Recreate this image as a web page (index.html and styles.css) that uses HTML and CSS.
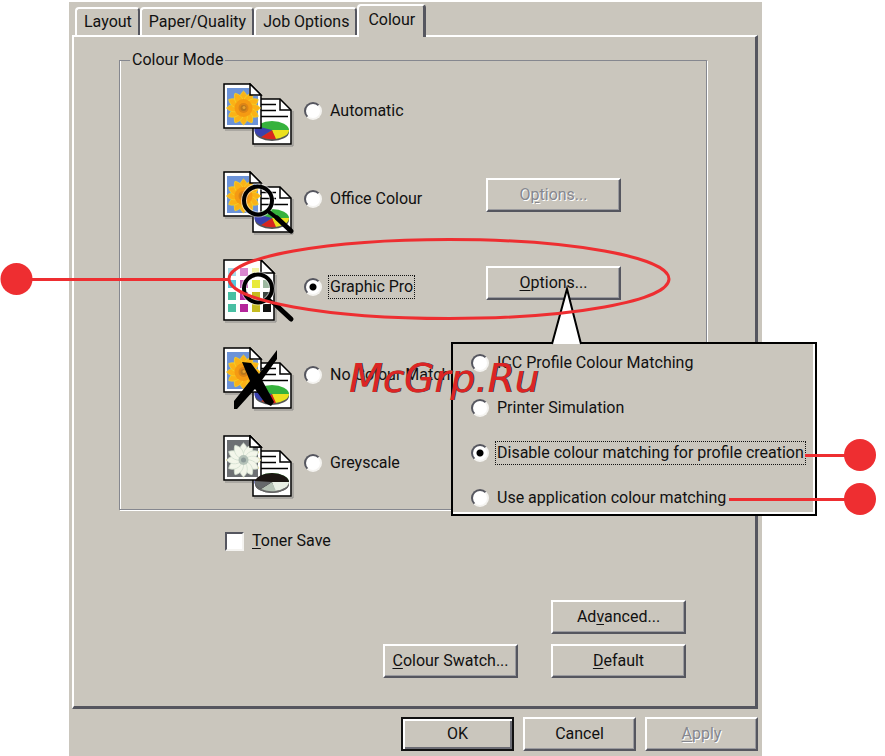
FILE: index.html
```html
<!DOCTYPE html>
<html lang="en">
<head>
<meta charset="UTF-8">
<meta name="viewport" content="width=device-width, initial-scale=1.0">
<title>Printer Properties - Colour</title>
<link rel="stylesheet" href="styles.css">
</head>
<body>

<!-- shared icon parts -->
<svg class="defs" width="0" height="0" aria-hidden="true">
    <defs>
        <path id="petal" d="M20.500 25 C14 17 17 11 20.500 8 C24 11 27 17 20.500 25 Z"/>
        <g id="petals">
            <use href="#petal"/>
            <use href="#petal" transform="rotate(30 20.500 25)"/>
            <use href="#petal" transform="rotate(60 20.500 25)"/>
            <use href="#petal" transform="rotate(90 20.500 25)"/>
            <use href="#petal" transform="rotate(120 20.500 25)"/>
            <use href="#petal" transform="rotate(150 20.500 25)"/>
            <use href="#petal" transform="rotate(180 20.500 25)"/>
            <use href="#petal" transform="rotate(210 20.500 25)"/>
            <use href="#petal" transform="rotate(240 20.500 25)"/>
            <use href="#petal" transform="rotate(270 20.500 25)"/>
            <use href="#petal" transform="rotate(300 20.500 25)"/>
            <use href="#petal" transform="rotate(330 20.500 25)"/>
        </g>
        <g id="flower">
            <use href="#petals" fill="#fbb216" stroke="#f3d02a" stroke-width=".8"/>
            <circle cx="20.500" cy="25" r="9" fill="#f59a12"/>
            <circle cx="20.500" cy="25" r="5" fill="#dd8416"/>
            <circle cx="20.500" cy="25" r="3" fill="#b9781c"/>
            <circle cx="21" cy="24.500" r="1.500" fill="#e9a22c"/>
        </g>
        <g id="pages">
            <path d="M31 63 H70 V28" fill="none" stroke="#8b8a88"/>
            <path d="M30 16 H57 L68 27 V61 H30 Z" fill="#fff" stroke="#000" stroke-width="1.500"/>
            <path d="M57 16 V27 H68" fill="none" stroke="#000" stroke-width="1.500"/>
            <path d="M38 21.500 H53 M38 27.500 H53 M38 33.500 H65" stroke="#000" stroke-width="1.500"/>
            <ellipse cx="49" cy="49" rx="17" ry="9" fill="#555"/>
            <ellipse cx="49" cy="47" rx="17" ry="9" fill="#36b23c"/>
            <path d="M49 47 L66 47 A17 9 0 0 1 52 56 Z" fill="#ece01e"/>
            <path d="M49 47 L53 56 A17 9 0 0 1 38 54 Z" fill="#d8251f"/>
            <path d="M49 47 L38 54 A17 9 0 0 1 33 43 Z" fill="#3a41ad"/>
            <path d="M2 47 H29" stroke="#8b8a88"/>
            <path d="M1 1 H27 L38 12 V45 H1 Z" fill="#fff" stroke="#000" stroke-width="1.500"/>
            <path d="M4 5 H26 V13 H35 V42 H4 Z" fill="#6c93d8"/>
            <use href="#flower"/>
            <path d="M27 1 V12 H38 Z" fill="#fff" stroke="#000" stroke-width="1.500"/>
        </g>
        <g id="lens" fill="none" stroke="#000" stroke-linecap="round">
            <circle cx="35" cy="29.500" r="14" stroke="#fff" stroke-opacity=".5" stroke-width="6"/>
            <circle cx="35" cy="29.500" r="14" stroke-width="4"/>
            <path d="M46 41 L54 47" stroke-width="4"/>
            <path d="M54 47 L68 60" stroke-width="5"/>
        </g>
    </defs>
</svg>

<main class="page">
    <div class="dialog">
        <div class="tabs" role="tablist">
            <button type="button" class="tab" role="tab">Layout</button>
            <button type="button" class="tab" role="tab">Paper/Quality</button>
            <button type="button" class="tab" role="tab">Job Options</button>
            <button type="button" class="tab active" role="tab" aria-selected="true">Colour</button>
        </div>

        <div class="panel" role="tabpanel">
            <fieldset class="modes">
                <legend>Colour Mode</legend>

                <div class="mode">
                    <svg class="icon" viewBox="0 0 72 64" aria-hidden="true"><use href="#pages"/></svg>
                    <label class="choice" for="automatic">
                        <input type="radio" id="automatic" name="mode">
                        <span>Automatic</span>
                    </label>
                </div>

                <div class="mode">
                    <svg class="icon" viewBox="0 0 72 64" aria-hidden="true"><use href="#pages"/><use href="#lens"/></svg>
                    <label class="choice" for="office">
                        <input type="radio" id="office" name="mode">
                        <span>Office Colour</span>
                    </label>
                    <button type="button" class="btn" disabled>O<u>p</u>tions...</button>
                </div>

                <div class="mode">
                    <svg class="icon" viewBox="0 0 72 64" aria-hidden="true">
                        <path d="M2 63 H53 V16" fill="none" stroke="#8b8a88"/>
                        <path d="M1 1 H38 L51 14 V61 H1 Z" fill="#fff" stroke="#000" stroke-width="1.500"/>
                        <path d="M5 9 h8 v8 h-8 Z" fill="#a5dce8"/>
                        <path d="M17 9 h8 v8 h-8 Z" fill="#d987cf"/>
                        <path d="M29 9 h7 v8 h-7 Z" fill="#f3f3a4"/>
                        <path d="M5 21 h8 v8 h-8 Z" fill="#59c6dc"/>
                        <path d="M17 21 h8 v8 h-8 Z" fill="#c65bb8"/>
                        <path d="M29 21 h8 v8 h-8 Z" fill="#e8ea3c"/>
                        <path d="M40 21 h8 v8 h-8 Z" fill="#9cb8a0"/>
                        <path d="M5 33 h8 v8 h-8 Z" fill="#48bfa3"/>
                        <path d="M17 33 h8 v8 h-8 Z" fill="#b5269b"/>
                        <path d="M29 33 h8 v8 h-8 Z" fill="#c5bb20"/>
                        <path d="M40 33 h8 v8 h-8 Z" fill="#3c4540"/>
                        <path d="M5 45 h8 v8 h-8 Z" fill="#48bfa3"/>
                        <path d="M17 45 h8 v8 h-8 Z" fill="#b5269b"/>
                        <path d="M29 45 h8 v8 h-8 Z" fill="#c5bb20"/>
                        <path d="M40 45 h8 v8 h-8 Z" fill="#111"/>
                        <path d="M38 1 V14 H51 Z" fill="#fff" stroke="#000" stroke-width="1.500"/>
                        <use href="#lens"/>
                    </svg>
                    <label class="choice focused" for="graphic">
                        <input type="radio" id="graphic" name="mode" checked>
                        <span>Graphic Pro</span>
                    </label>
                    <button type="button" class="btn"><u>O</u>ptions...</button>
                </div>

                <div class="mode">
                    <svg class="icon" viewBox="0 0 72 64" aria-hidden="true">
                        <use href="#pages"/>
                        <path d="M54 3 V12 L39 33 L51 55 L48 59 L42 56 L32 42 L14 62 L11 62 V54 L27 34 L19 15 L28 16 L36 27 Z" fill="#000"/>
                    </svg>
                    <label class="choice" for="nomatch">
                        <input type="radio" id="nomatch" name="mode">
                        <span>No Colour Matching</span>
                    </label>
                </div>

                <div class="mode">
                    <svg class="icon" viewBox="0 0 72 64" aria-hidden="true">
                        <use href="#pages"/>
                        <path d="M4 5 H26 V13 H35 V42 H4 Z" fill="#6d7073"/>
                        <use href="#petals" fill="#f3f6ea" stroke="#d3dfd0" stroke-width=".8"/>
                        <path d="M27 1 V12 H38 Z" fill="#fff" stroke="#000" stroke-width="1.500"/>
                        <circle cx="20.500" cy="25" r="5" fill="#b4c2b8"/>
                        <circle cx="20.500" cy="25" r="2.500" fill="#8d9b99"/>
                        <ellipse cx="49" cy="49" rx="17" ry="9" fill="#666"/>
                        <ellipse cx="49" cy="47" rx="17" ry="9" fill="#1c1613"/>
                        <path d="M49 47 L66 47 A17 9 0 0 1 52 56 Z" fill="#e9efe4"/>
                        <path d="M49 47 L53 56 A17 9 0 0 1 38 54 Z" fill="#b5c2b4"/>
                        <path d="M49 47 L38 54 A17 9 0 0 1 32 46 Z" fill="#66696b"/>
                    </svg>
                    <label class="choice" for="grey">
                        <input type="radio" id="grey" name="mode">
                        <span>Greyscale</span>
                    </label>
                </div>
            </fieldset>

            <label class="toner" for="toner">
                <input type="checkbox" id="toner">
                <span><u>T</u>oner Save</span>
            </label>

            <div class="actions">
                <button type="button" class="btn advanced">Ad<u>v</u>anced...</button>
                <button type="button" class="btn"><u>C</u>olour Swatch...</button>
                <button type="button" class="btn"><u>D</u>efault</button>
            </div>
        </div>

        <div class="footer">
            <button type="button" class="btn ok">OK</button>
            <button type="button" class="btn">Cancel</button>
            <button type="button" class="btn" disabled><u>A</u>pply</button>
        </div>
    </div>

    <div class="popup">
        <label class="choice" for="icc">
            <input type="radio" id="icc" name="matching">
            <span>ICC Profile Colour Matching</span>
        </label>
        <label class="choice" for="simulation">
            <input type="radio" id="simulation" name="matching">
            <span>Printer Simulation</span>
        </label>
        <label class="choice focused" for="disable">
            <input type="radio" id="disable" name="matching" checked>
            <span>Disable colour matching for profile creation</span>
        </label>
        <label class="choice" for="application">
            <input type="radio" id="application" name="matching">
            <span>Use application colour matching</span>
        </label>
    </div>

    <!-- callout pointer and red markers -->
    <svg class="marks" width="885" height="756" viewBox="0 0 885 756" aria-hidden="true">
        <path d="M552 344 L567 289 L581 344 Z" fill="#fff"/>
        <path d="M552 344 L567 289 L581 344" fill="none" stroke="#000" stroke-width="2"/>
        <g fill="none" stroke="#ee2e31" stroke-width="3">
            <ellipse cx="449" cy="279" rx="220" ry="39.500"/>
            <path d="M16 279.500 H230 M805 455.500 H860 M729 499.500 H860"/>
        </g>
        <g fill="#ee2e31">
            <circle cx="16.500" cy="279" r="16"/>
            <circle cx="860" cy="455" r="16"/>
            <circle cx="860" cy="499" r="16"/>
        </g>
    </svg>
    <div class="watermark">McGrp.Ru</div>
</main>

</body>
</html>
```
FILE: styles.css
```css
body {
    margin: 0;
    background: #fff;
    color: #111;
    font-family: Roboto, "Liberation Sans", sans-serif;
    font-size: 16px;
    line-height: 20px;
}
button, input {
    font: inherit;
    color: inherit;
    margin: 0;
}
.defs {
    position: absolute;
}
.page {
    position: relative;
    box-sizing: border-box;
    min-height: 100vh;
    padding: 2px 123px 0 69px;
    display: flex;
    overflow: hidden;
}
.dialog {
    flex: 1;
    padding: 2px 4px 6px 3px;
    background: #cac6bd;
}

/* tabs */
.tabs {
    display: flex;
    align-items: flex-end;
    padding-left: 3px;
}
.tab {
    height: 28px;
    padding: 0 6px 0 7px;
    border: 2px solid #fff;
    border-right-color: #55565f;
    border-bottom: 0;
    border-radius: 4px 4px 0 0;
    background: #cac6bd;
    white-space: nowrap;
}
.tab.active {
    height: 33px;
    margin-bottom: -2px;
    padding: 0 8px 3px 9px;
    border-right-width: 3px;
    position: relative;
}
.panel {
    padding: 13px 48px 28px 45px;
    border: 2px solid #fff;
    border-right: 3px solid #55565f;
    border-bottom: 3px solid #55565f;
}

/* colour modes */
.modes {
    display: grid;
    gap: 24px;
    margin: 0;
    padding: 13px 0 10px 103px;
    border: 1px solid #85878f;
    box-shadow: 1px 1px #fff, inset 1px 0 #fff;
}
.modes legend {
    margin-left: -93px;
    padding: 0 2px;
}
.mode {
    display: grid;
    grid-template-columns: 81px 182px auto;
    justify-content: start;
    align-items: start;
    height: 64px;
}
.icon {
    width: 72px;
    height: 64px;
}
.mode .btn {
    margin-top: 7px;
}
.choice {
    display: flex;
    align-items: center;
    gap: 7px;
    white-space: nowrap;
}
.mode .choice {
    margin-top: 17px;
}
.choice span {
    padding: 1px;
}
.focused span {
    outline: 1px dotted #111;
}
input[type="radio"] {
    appearance: none;
    flex: none;
    width: 18px;
    height: 18px;
    border: 2px solid;
    border-color: #55565f #f4f3f0 #f4f3f0 #55565f;
    border-radius: 50%;
    background: #fff;
}
input[type="radio"]:checked {
    background: radial-gradient(circle, #000 3px, #fff 4px);
}

.toner {
    display: flex;
    align-items: center;
    gap: 8px;
    width: max-content;
    margin: 21px 0 0 106px;
}
input[type="checkbox"] {
    appearance: none;
    width: 19px;
    height: 19px;
    border: 2px solid;
    border-color: #55565f #f4f3f0 #f4f3f0 #55565f;
    background: #fff;
}

/* buttons */
.btn {
    width: 135px;
    height: 34px;
    padding: 0;
    border: 2px solid;
    border-color: #fff #55565f #55565f #fff;
    box-shadow: inset -1px -1px #9a9a9e;
    background: #cac6bd;
    white-space: nowrap;
}
.btn:disabled {
    color: #85878f;
    text-shadow: 1px 1px #fff;
}
u {
    text-underline-offset: 2px;
}
.actions {
    display: grid;
    grid-template-columns: 135px 135px;
    justify-content: end;
    gap: 10px 33px;
    margin: 49px 21px 0 0;
}
.advanced {
    grid-column: 2;
}
.footer {
    display: flex;
    justify-content: flex-end;
    gap: 9px;
    margin-top: 8px;
}
.footer .btn {
    width: 113px;
}
.footer .ok {
    border-color: #111;
    box-shadow: inset 2px 2px #fff, inset -2px -2px #6b6c74;
}

/* options popup */
.popup {
    position: absolute;
    left: 451px;
    top: 342px;
    display: flex;
    flex-direction: column;
    gap: 21px;
    box-sizing: border-box;
    width: 366px;
    padding: 7px 16px 4px 18px;
    border: 2px solid #000;
    box-shadow: inset -2px -2px #fff;
    background: #cac6bd;
}
.popup .choice {
    height: 24px;
}
.marks {
    position: absolute;
    left: 0;
    top: 0;
    pointer-events: none;
}
.watermark {
    position: absolute;
    left: 349px;
    top: 356px;
    color: #dc2424;
    font: italic 39px/46px "DejaVu Sans", sans-serif;
    text-shadow: 1px 0 #333;
    pointer-events: none;
}
```
